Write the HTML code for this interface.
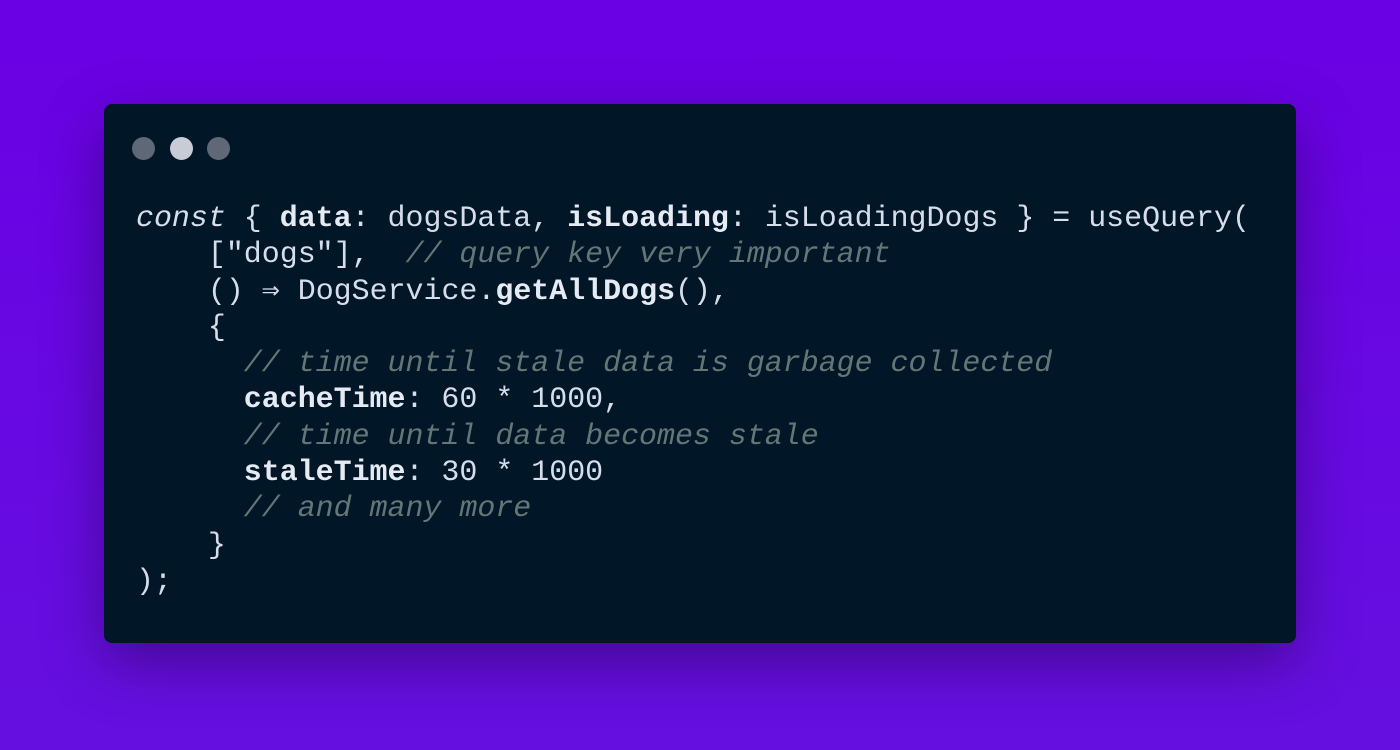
<!DOCTYPE html>
<html><head><style>
body{margin:0;width:1400px;height:750px;overflow:hidden;background:linear-gradient(180deg,#6a00e4 0%,#6510e0 100%);}
.card{position:absolute;left:104px;top:104px;width:1192px;height:539px;background:#011627;border-radius:8px;box-shadow:0 20px 60px rgba(0,0,0,.35);}
.dot{position:absolute;top:33px;width:23px;height:23px;border-radius:50%;}
pre{position:absolute;left:32px;top:96px;margin:0;font-family:"Liberation Mono",monospace;font-size:29.95px;line-height:36.3px;color:#d6deeb;}
i{color:#637777;}
b{font-weight:bold;color:#e6ebf3;}
</style></head><body>
<div class="card">
<div class="dot" style="left:28px;background:#5f6877"></div>
<div class="dot" style="left:66px;background:#c8ccd6"></div>
<div class="dot" style="left:103px;background:#5f6877"></div>
<pre><i style="color:#d6deeb">const</i> { <b>data</b>: dogsData, <b>isLoading</b>: isLoadingDogs } = useQuery(
    ["dogs"],  <i>// query key very important</i>
    () ⇒ DogService.<b>getAllDogs</b>(),
    {
      <i>// time until stale data is garbage collected</i>
      <b>cacheTime</b>: 60 * 1000,
      <i>// time until data becomes stale</i>
      <b>staleTime</b>: 30 * 1000
      <i>// and many more</i>
    }
);</pre>
</div>
</body></html>
